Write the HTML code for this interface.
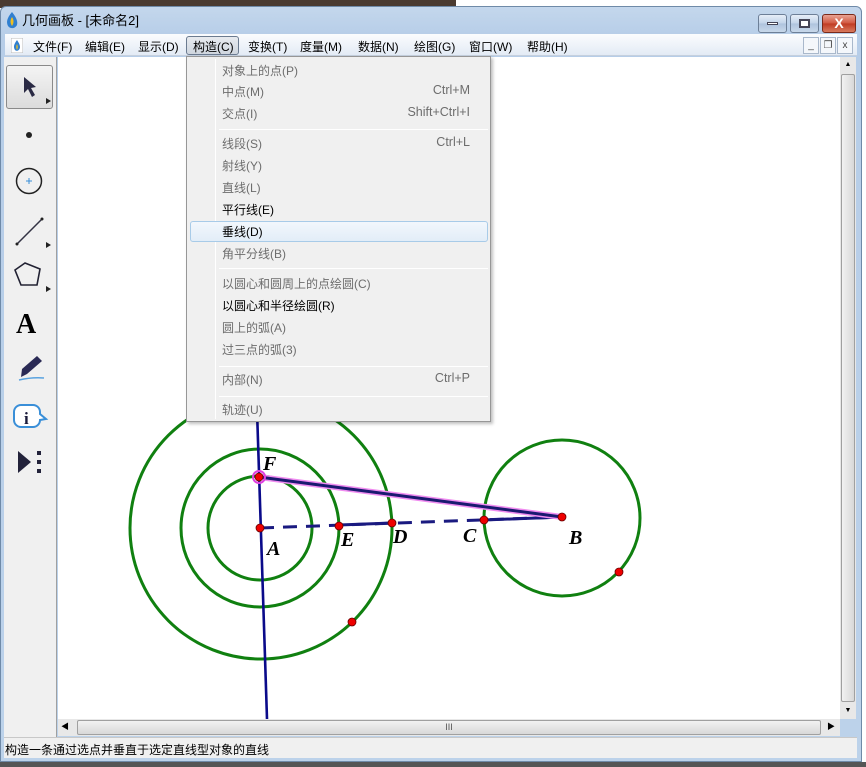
<!DOCTYPE html>
<html><head><meta charset="utf-8"><style>
*{margin:0;padding:0;box-sizing:border-box}
body{width:866px;height:767px;overflow:hidden;position:relative;background:#fff;font-family:"Liberation Sans","Noto Sans CJK SC",sans-serif;font-size:12px;color:#000}
.abs{position:absolute}
#topbg{left:0;top:0;width:456px;height:8px;background:#4a3a30}
#win{left:0;top:6px;width:862px;height:756px;background:linear-gradient(#c4d7ec,#b6cde8 30px,#bcd2ea);border:1px solid #6f8aa8;border-radius:6px 6px 0 0}
#title{left:22px;top:10px;font-size:13px;color:#000}
.wb{top:14px;height:19px;border:1px solid #6d7f97;border-radius:3px;background:linear-gradient(#e6eef8,#c2d3e8 50%,#aec3dd 51%,#c8d8ea)}
#menubar{left:5px;top:34px;width:852px;height:22px;background:linear-gradient(#fbfcfe,#e3ebf5);border-bottom:1px solid #c5d0de}
.mi{position:absolute;top:4px;font-size:12px}
#cur{left:186px;top:36px;width:53px;height:19px;border:1px solid #6b7b90;border-radius:3px;background:linear-gradient(#e8ebef,#cfd6df)}
.mdib{top:37px;width:16px;height:17px;border:1px solid #a9b8cb;background:#f4f7fb;font-size:10px;text-align:center;line-height:15px;color:#444}
#tool{left:4px;top:57px;width:53px;height:680px;background:#f0f0f0;border-right:1px solid #a0a0a0}
#canvas{left:58px;top:57px;width:783px;height:662px;background:#fff}
#vs{left:840px;top:57px;width:16px;height:662px;background:#e8e8e8}
#hs{left:58px;top:719px;width:782px;height:17px;background:#e8e8e8}
#status{left:4px;top:737px;width:853px;height:21px;background:#f0f0f0;border-top:1px solid #c8c8c8;font-size:12px;padding:3px 0 0 1px}
#menu{left:186px;top:56px;width:305px;height:366px;background:#f0f0f0;border:1px solid #979797;box-shadow:2px 2px 3px rgba(0,0,0,.25)}
.it{position:absolute;left:35px;font-size:12px;color:#6d6d6d}
.it.en{color:#000}
.sc{position:absolute;right:20px;font-size:12.5px;color:#6d6d6d}
.sep{position:absolute;left:32px;right:2px;height:1px;background:#dcdcdc;border-bottom:1px solid #fff}
</style></head><body>
<div class="abs" id="topbg"></div>
<div class="abs" style="left:456px;top:0;width:410px;height:8px;background:#fff"></div>
<div class="abs" id="win"></div>
<svg class="abs" style="left:5px;top:11px" width="14" height="18"><path d="M7 1 C2 7 1 11 3 15 C5 18 10 18 12 14 C13 10 11 6 7 1Z" fill="#2f7fd0"/><path d="M7 6 C5 9 5 12 7 15 C9 12 9 9 7 6Z" fill="#f0c020"/></svg>
<div class="abs" id="title">几何画板 - [未命名2]</div>
<div class="abs wb" style="left:758px;width:29px"><div style="margin:7px auto 0;width:11px;height:3px;background:#fff;border:1px solid #445"></div></div>
<div class="abs wb" style="left:790px;width:29px"><div style="margin:4px auto 0;width:11px;height:9px;border:2px solid #445;background:#fff"></div></div>
<div class="abs wb" style="left:822px;width:34px;background:linear-gradient(#e8a394,#d0553d 50%,#c03a22 51%,#d87a5e);border-color:#7a2a1a;color:#fff;font-weight:bold;text-align:center;line-height:17px;font-size:14px">X</div>
<div class="abs" id="menubar"></div>
<svg class="abs" style="left:11px;top:38px" width="12" height="15"><rect x="0" y="0" width="12" height="15" fill="#fff" stroke="#bbb"/><path d="M6 2 C3 6 2 9 4 12 C6 14 9 12 9 9 C9 7 8 5 6 2Z" fill="#2f7fd0"/><path d="M6 6 C5 8 5 10 6 12 C7 10 7 8 6 6Z" fill="#f0c020"/></svg>
<div class="abs" id="cur"></div>
<div class="abs" style="left:0;top:34px;width:600px;height:22px">
<span class="mi" style="left:33px">文件(F)</span><span class="mi" style="left:85px">编辑(E)</span><span class="mi" style="left:138px">显示(D)</span><span class="mi" style="left:193px">构造(C)</span><span class="mi" style="left:248px">变换(T)</span><span class="mi" style="left:300px">度量(M)</span><span class="mi" style="left:358px">数据(N)</span><span class="mi" style="left:414px">绘图(G)</span><span class="mi" style="left:469px">窗口(W)</span><span class="mi" style="left:527px">帮助(H)</span></div>
<div class="abs mdib" style="left:803px">_</div><div class="abs mdib" style="left:820px">&#x2750;</div><div class="abs mdib" style="left:837px">x</div>
<div class="abs" id="tool"></div>
<div class="abs" style="left:6px;top:65px;width:47px;height:44px;border:1px solid #8a8a8a;border-radius:3px;background:linear-gradient(#f4f4f4,#dcdcdc)"></div>
<svg class="abs" style="left:4px;top:57px" width="53" height="430">
<path d="M20 20 L20 36 L24 32 L28 40 L31 38 L27 31 L32 30 Z" fill="#2a2a44"/><path d="M42 41 L47 44 L42 47Z" fill="#222"/>
<circle cx="25" cy="78" r="3" fill="#222"/>
<circle cx="25" cy="124" r="12.5" fill="none" stroke="#222" stroke-width="1.5"/><path d="M22 124h6M25 121v6" stroke="#3a8fd8" stroke-width="1"/>
<path d="M13 187 L38 162" stroke="#334" stroke-width="1.5"/><circle cx="13" cy="187" r="1.5" fill="#222"/><circle cx="38" cy="162" r="1.5" fill="#222"/><path d="M42 185 L47 188 L42 191Z" fill="#222"/>
<path d="M21 206 L36 212 L33 228 L17 228 L11 213 Z" fill="none" stroke="#223" stroke-width="1.6"/><path d="M42 229 L47 232 L42 235Z" fill="#222"/>
<text x="12" y="276" font-family="Liberation Serif" font-weight="bold" font-size="28" fill="#000">A</text>
<path d="M18 312 L33 299 L38 304 L23 317 L17 320Z" fill="#2a2a55"/><path d="M15 323 Q28 320 40 321" stroke="#5aa3e0" stroke-width="1.5" fill="none"/>
<path d="M17 348 h12 a7 7 0 0 1 7 7 v2 l6 5 -6 1 a7 7 0 0 1 -7 7 h-12 a7 7 0 0 1 -7 -7 v-8 a7 7 0 0 1 7 -7z" fill="#fff" stroke="#3a8fd8" stroke-width="2"/>
<text x="20" y="367" font-family="Liberation Serif" font-weight="bold" font-size="17" fill="#1a1a3a">i</text>
<path d="M14 394 L27 405 L14 416Z" fill="#22223a"/><rect x="33" y="394" width="4" height="4" fill="#22223a"/><rect x="33" y="403" width="4" height="4" fill="#22223a"/><rect x="33" y="412" width="4" height="4" fill="#22223a"/>
</svg>
<div class="abs" id="canvas"></div>
<svg class="abs" style="left:0;top:0" width="866" height="767">
<g fill="none" stroke="#108010" stroke-width="3">
<circle cx="260" cy="528" r="52"/><circle cx="260" cy="528" r="79"/><circle cx="261" cy="528" r="131"/><circle cx="562" cy="518" r="78"/></g>
<line x1="257" y1="410" x2="267" y2="719" stroke="#0a0a8a" stroke-width="2.6"/>
<line x1="260" y1="528" x2="562" y2="517" stroke="#1a1a80" stroke-width="3" stroke-dasharray="14 9"/>
<line x1="339" y1="525" x2="391" y2="523" stroke="#1a1a80" stroke-width="3"/>
<line x1="484" y1="520" x2="562" y2="517" stroke="#1a1a80" stroke-width="3"/>
<line x1="259" y1="477" x2="562" y2="517" stroke="#f08cf0" stroke-width="6"/>
<line x1="259" y1="477" x2="562" y2="517" stroke="#1a1a70" stroke-width="3"/>
<g fill="#e00" stroke="#600" stroke-width="0.8">
<circle cx="260" cy="528" r="4"/><circle cx="339" cy="526" r="4"/><circle cx="392" cy="523" r="4"/><circle cx="484" cy="520" r="4"/><circle cx="562" cy="517" r="4"/><circle cx="352" cy="622" r="4"/><circle cx="619" cy="572" r="4"/></g>
<circle cx="259" cy="477" r="6" fill="none" stroke="#e040e0" stroke-width="2"/><circle cx="259" cy="477" r="4" fill="#e00" stroke="#600" stroke-width="0.8"/>
<g font-family="Liberation Serif" font-style="italic" font-weight="bold" font-size="20" fill="#000">
<text x="263" y="470">F</text><text x="267" y="555">A</text><text x="341" y="546">E</text><text x="393" y="543">D</text><text x="463" y="542">C</text><text x="569" y="544">B</text></g>
</svg>
<div class="abs" id="vs"><div style="position:absolute;left:0;top:0;width:16px;height:16px;text-align:center;font-size:7px;line-height:16px">▲</div><div style="position:absolute;left:1px;top:17px;width:14px;height:628px;background:linear-gradient(90deg,#f2f2f2,#d8d8d8);border:1px solid #a0a0a0;border-radius:2px"></div><div style="position:absolute;left:0;top:646px;width:16px;height:16px;text-align:center;font-size:7px;line-height:16px">▼</div></div>
<div class="abs" id="hs"><div style="position:absolute;left:3px;top:2px;font-size:8px">◀</div><div style="position:absolute;left:19px;top:1px;width:744px;height:15px;background:linear-gradient(#f2f2f2,#d8d8d8);border:1px solid #a0a0a0;border-radius:2px;text-align:center;font-size:9px;line-height:13px;color:#555">III</div><div style="position:absolute;left:769px;top:2px;font-size:8px">▶</div></div>
<div class="abs" id="status">构造一条通过选点并垂直于选定直线型对象的直线</div>
<div class="abs" style="left:0;top:762px;width:866px;height:5px;background:#555"></div>
<div class="abs" id="menu">
<div class="abs" style="left:28px;top:2px;width:1px;height:360px;background:#e0e0e0;border-right:1px solid #fff"></div>
<div class="it" style="top:5px">对象上的点(P)</div>
<div class="it" style="top:26px">中点(M)</div><div class="sc" style="top:26px">Ctrl+M</div>
<div class="it" style="top:48px">交点(I)</div><div class="sc" style="top:48px">Shift+Ctrl+I</div>
<div class="sep" style="top:72px"></div>
<div class="it" style="top:78px">线段(S)</div><div class="sc" style="top:78px">Ctrl+L</div>
<div class="it" style="top:100px">射线(Y)</div>
<div class="it" style="top:122px">直线(L)</div>
<div class="it en" style="top:144px">平行线(E)</div>
<div class="abs" style="left:3px;top:164px;width:298px;height:21px;border:1px solid #a8cbe8;border-radius:3px;background:linear-gradient(#f2f7fc,#e2edf8)"></div>
<div class="it en" style="top:166px">垂线(D)</div>
<div class="it" style="top:188px">角平分线(B)</div>
<div class="sep" style="top:211px"></div>
<div class="it" style="top:218px">以圆心和圆周上的点绘圆(C)</div>
<div class="it en" style="top:240px">以圆心和半径绘圆(R)</div>
<div class="it" style="top:262px">圆上的弧(A)</div>
<div class="it" style="top:284px">过三点的弧(3)</div>
<div class="sep" style="top:309px"></div>
<div class="it" style="top:314px">内部(N)</div><div class="sc" style="top:314px">Ctrl+P</div>
<div class="sep" style="top:339px"></div>
<div class="it" style="top:344px">轨迹(U)</div>
</div>
</body></html>
